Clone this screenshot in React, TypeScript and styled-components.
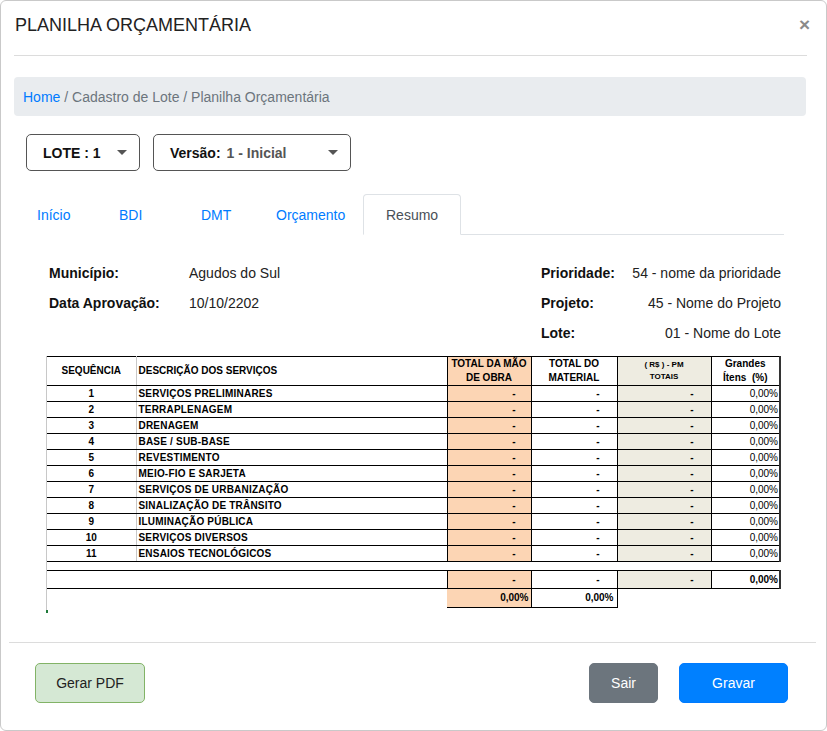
import React from "react";
import styled, { createGlobalStyle } from "styled-components";

const Global = createGlobalStyle`
  html, body { margin: 0; padding: 0; background: #fff; }
  body { font-family: "Liberation Sans", Arial, sans-serif; color: #212529; }
  * { box-sizing: border-box; }
`;

const Modal = styled.div`
  width: 827px;
  height: 731px;
  border: 1px solid #c9c9c9;
  border-radius: 6px;
  display: flex;
  flex-direction: column;
  background: #fff;
  overflow: hidden;
`;

const Header = styled.div`
  height: 55px;
  margin: 0 19px 0 13px;
  padding-top: 13px;
  border-bottom: 1px solid #dcdcdc;
  display: flex;
  justify-content: space-between;
  align-items: flex-start;
`;

const Title = styled.h1`
  margin: 0 0 0 1px;
  font-size: 18px;
  font-weight: 400;
  line-height: 22px;
  color: #222;
`;

const Close = styled.button`
  border: none;
  background: none;
  padding: 0;
  margin-right: -3px;
  font-family: "Liberation Sans", Arial, sans-serif;
  font-size: 19px;
  font-weight: 700;
  line-height: 22px;
  color: #8a8a8a;
  cursor: pointer;
`;

const Body = styled.div`
  flex: 1;
  padding: 21px 20px 0 13px;
`;

const Breadcrumb = styled.nav`
  height: 39px;
  background: #e9ecef;
  border-radius: 4px;
  padding: 0 9px;
  display: flex;
  align-items: center;
  font-size: 14px;
  color: #6c757d;
`;

const Crumb = styled.span<{ $link?: boolean }>`
  color: ${(p) => (p.$link ? "#007bff" : "#6c757d")};
`;

const Selects = styled.div`
  margin-top: 18px;
  padding-left: 12px;
  display: flex;
  gap: 13px;
`;

const SelectBox = styled.div<{ $w: number }>`
  width: ${(p) => p.$w}px;
  height: 37px;
  border: 1px solid #555;
  border-radius: 5px;
  padding: 0 12px 0 16px;
  display: flex;
  align-items: center;
  justify-content: space-between;
  font-size: 14px;
  font-weight: 700;
  color: #111;
`;

const SelectValue = styled.span`
  color: #555;
  margin-left: 6px;
`;

const Caret = styled.span`
  width: 0;
  height: 0;
  border-left: 5px solid transparent;
  border-right: 5px solid transparent;
  border-top: 5px solid #555;
`;

const Tabs = styled.div`
  margin: 23px 22px 0 5px;
  height: 41px;
  border-bottom: 1px solid #dee2e6;
  display: flex;
  align-items: flex-end;
`;

const Tab = styled.div<{ $w: number; $pad: number; $active?: boolean }>`
  width: ${(p) => p.$w}px;
  height: 41px;
  padding-left: ${(p) => p.$pad}px;
  display: flex;
  align-items: center;
  font-size: 14px;
  color: ${(p) => (p.$active ? "#495057" : "#007bff")};
  border: 1px solid ${(p) => (p.$active ? "#dee2e6" : "transparent")};
  border-bottom-color: ${(p) => (p.$active ? "#fff" : "transparent")};
  border-radius: 4px 4px 0 0;
  background: #fff;
  margin-bottom: -1px;
`;

const Info = styled.div`
  margin: 23px 25px 0 35px;
  display: flex;
  justify-content: space-between;
  font-size: 14px;
  color: #222;
`;

const InfoGrid = styled.div<{ $cols: string; $w: number }>`
  width: ${(p) => p.$w}px;
  display: grid;
  grid-template-columns: ${(p) => p.$cols};
  grid-auto-rows: 30px;
  align-items: center;
`;

const Label = styled.span`
  font-weight: 700;
  color: #111;
`;

const Value = styled.span<{ $right?: boolean }>`
  text-align: ${(p) => (p.$right ? "right" : "left")};
`;

const SheetWrap = styled.div`
  margin: 8px 0 0 32px;
  width: 736px;
  border-left: 1px solid #c8c8c8;
  position: relative;
  padding-bottom: 2px;
`;

const Mark = styled.span`
  position: absolute;
  left: -1px;
  bottom: -3px;
  width: 2px;
  height: 3px;
  background: #1f7a3a;
`;

const Sheet = styled.table`
  border-collapse: collapse;
  table-layout: fixed;
  width: 733px;
  font-family: "Liberation Sans", Arial, sans-serif;
  font-size: 10px;
  color: #000;
`;

type Tone = "peach" | "beige" | "none";

const bg = (t?: Tone) => (t === "peach" ? "#fcd5b4" : t === "beige" ? "#eeece1" : "#fff");

const Th = styled.th<{ $tone?: Tone; $left?: boolean; $small?: boolean; $soft?: boolean; $last?: boolean }>`
  height: 27px;
  padding: 0 2px;
  background: ${(p) => bg(p.$tone)};
  border-top: 1px solid #000;
  border-bottom: 1px solid #000;
  border-right: ${(p) => (p.$last ? "2px solid #333" : p.$soft ? "1px solid #c8c8c8" : "1px solid #000")};
  font-size: ${(p) => (p.$small ? "8px" : "10px")};
  font-weight: 700;
  line-height: ${(p) => (p.$small ? "12px" : "14px")};
  text-align: ${(p) => (p.$left ? "left" : "center")};
  vertical-align: middle;
`;

const Td = styled.td<{
  $tone?: Tone;
  $align?: "left" | "center" | "right";
  $bold?: boolean;
  $soft?: boolean;
  $last?: boolean;
  $pr?: number;
  $plain?: boolean;
  $h?: number;
}>`
  height: ${(p) => p.$h ?? 16}px;
  padding: 0 ${(p) => p.$pr ?? 2}px 0 2px;
  background: ${(p) => bg(p.$tone)};
  border-top: ${(p) => (p.$plain ? "none" : "1px solid #000")};
  border-bottom: ${(p) => (p.$plain ? "none" : "1px solid #000")};
  border-right: ${(p) =>
    p.$plain ? "none" : p.$last ? "2px solid #333" : p.$soft ? "1px solid #c8c8c8" : "1px solid #000"};
  text-align: ${(p) => p.$align ?? "left"};
  font-weight: ${(p) => (p.$bold ? 700 : 400)};
  letter-spacing: ${(p) => (p.$bold && p.$align === "left" ? "0.2px" : "0")};
  line-height: 14px;
  white-space: nowrap;
  overflow: hidden;
`;

const Gap = styled.td`
  height: 9px;
  padding: 0;
  border: none;
`;

const Footer = styled.div`
  margin: 0 10px 0 8px;
  height: 88px;
  border-top: 1px solid #dcdcdc;
  padding: 20px 28px 0 26px;
  display: flex;
  align-items: flex-start;
  gap: 21px;
`;

const Button = styled.button<{ $variant: "pdf" | "gray" | "blue"; $w: number }>`
  width: ${(p) => p.$w}px;
  height: 40px;
  border-radius: 5px;
  font-family: "Liberation Sans", Arial, sans-serif;
  font-size: 14px;
  cursor: pointer;
  border: 1px solid
    ${(p) => (p.$variant === "pdf" ? "#82b366" : p.$variant === "gray" ? "#6c757d" : "#007bff")};
  background: ${(p) => (p.$variant === "pdf" ? "#d5e8d4" : p.$variant === "gray" ? "#6c757d" : "#0080ff")};
  color: ${(p) => (p.$variant === "pdf" ? "#222" : "#fff")};
`;

const Spacer = styled.div`
  flex: 1;
`;

const services = [
  "SERVIÇOS PRELIMINARES",
  "TERRAPLENAGEM",
  "DRENAGEM",
  "BASE / SUB-BASE",
  "REVESTIMENTO",
  "MEIO-FIO E SARJETA",
  "SERVIÇOS DE URBANIZAÇÃO",
  "SINALIZAÇÃO DE TRÂNSITO",
  "ILUMINAÇÃO PÚBLICA",
  "SERVIÇOS DIVERSOS",
  "ENSAIOS TECNOLÓGICOS",
];

const tabs = [
  { label: "Início", w: 82, pad: 17 },
  { label: "BDI", w: 82, pad: 17 },
  { label: "DMT", w: 75, pad: 17 },
  { label: "Orçamento", w: 105, pad: 17 },
  { label: "Resumo", w: 98, pad: 22, active: true },
];

export default function App() {
  return (
    <>
      <Global />
      <Modal>
        <Header>
          <Title>PLANILHA ORÇAMENTÁRIA</Title>
          <Close aria-label="Fechar">×</Close>
        </Header>
        <Body>
          <Breadcrumb>
            <Crumb $link>Home</Crumb>
            <Crumb>&nbsp;/ Cadastro de Lote / Planilha Orçamentária</Crumb>
          </Breadcrumb>
          <Selects>
            <SelectBox $w={114}>
              <span>LOTE : 1</span>
              <Caret />
            </SelectBox>
            <SelectBox $w={198}>
              <span>
                Versão:<SelectValue>1 - Inicial</SelectValue>
              </span>
              <Caret />
            </SelectBox>
          </Selects>
          <Tabs>
            {tabs.map((t) => (
              <Tab key={t.label} $w={t.w} $pad={t.pad} $active={t.active}>
                {t.label}
              </Tab>
            ))}
          </Tabs>
          <Info>
            <InfoGrid $cols="140px 1fr" $w={300}>
              <Label>Município:</Label>
              <Value>Agudos do Sul</Value>
              <Label>Data Aprovação:</Label>
              <Value>10/10/2202</Value>
            </InfoGrid>
            <InfoGrid $cols="max-content 1fr" $w={240}>
              <Label>Prioridade:</Label>
              <Value $right>54 - nome da prioridade</Value>
              <Label>Projeto:</Label>
              <Value $right>45 - Nome do Projeto</Value>
              <Label>Lote:</Label>
              <Value $right>01 - Nome do Lote</Value>
            </InfoGrid>
          </Info>
          <SheetWrap>
            <Sheet>
              <colgroup>
                <col style={{ width: 89 }} />
                <col style={{ width: 311 }} />
                <col style={{ width: 84 }} />
                <col style={{ width: 86 }} />
                <col style={{ width: 94 }} />
                <col style={{ width: 69 }} />
              </colgroup>
              <thead>
                <tr>
                  <Th $soft>SEQUÊNCIA</Th>
                  <Th $left>DESCRIÇÃO DOS SERVIÇOS</Th>
                  <Th $tone="peach">
                    TOTAL DA MÃO
                    <br />
                    DE OBRA
                  </Th>
                  <Th>
                    TOTAL DO
                    <br />
                    MATERIAL
                  </Th>
                  <Th $tone="beige" $small>
                    ( R$ ) - PM
                    <br />
                    TOTAIS
                  </Th>
                  <Th $last>
                    Grandes
                    <br />
                    Ítens&nbsp; (%)
                  </Th>
                </tr>
              </thead>
              <tbody>
                {services.map((s, i) => (
                  <tr key={s}>
                    <Td $soft $bold $align="center">
                      {i + 1}
                    </Td>
                    <Td $bold $align="left">
                      {s}
                    </Td>
                    <Td $tone="peach" $bold $align="right" $pr={15}>
                      -
                    </Td>
                    <Td $bold $align="right" $pr={17}>
                      -
                    </Td>
                    <Td $tone="beige" $bold $align="right" $pr={17}>
                      -
                    </Td>
                    <Td $last $align="right" $pr={1}>
                      0,00%
                    </Td>
                  </tr>
                ))}
                <tr>
                  <Gap colSpan={6} />
                </tr>
                <tr>
                  <Td colSpan={2} $h={18} />
                  <Td $tone="peach" $bold $align="right" $pr={15} $h={18}>
                    -
                  </Td>
                  <Td $bold $align="right" $pr={17} $h={18}>
                    -
                  </Td>
                  <Td $tone="beige" $bold $align="right" $pr={17} $h={18}>
                    -
                  </Td>
                  <Td $last $bold $align="right" $pr={1} $h={18}>
                    0,00%
                  </Td>
                </tr>
                <tr>
                  <Td colSpan={2} $plain $h={19} />
                  <Td $tone="peach" $bold $align="right" $pr={2} $h={19}>
                    0,00%
                  </Td>
                  <Td $bold $align="right" $pr={3} $h={19}>
                    0,00%
                  </Td>
                  <Td colSpan={2} $plain $h={19} />
                </tr>
              </tbody>
            </Sheet>
            <Mark />
          </SheetWrap>
        </Body>
        <Footer>
          <Button $variant="pdf" $w={110}>
            Gerar PDF
          </Button>
          <Spacer />
          <Button $variant="gray" $w={69}>
            Sair
          </Button>
          <Button $variant="blue" $w={109}>
            Gravar
          </Button>
        </Footer>
      </Modal>
    </>
  );
}
